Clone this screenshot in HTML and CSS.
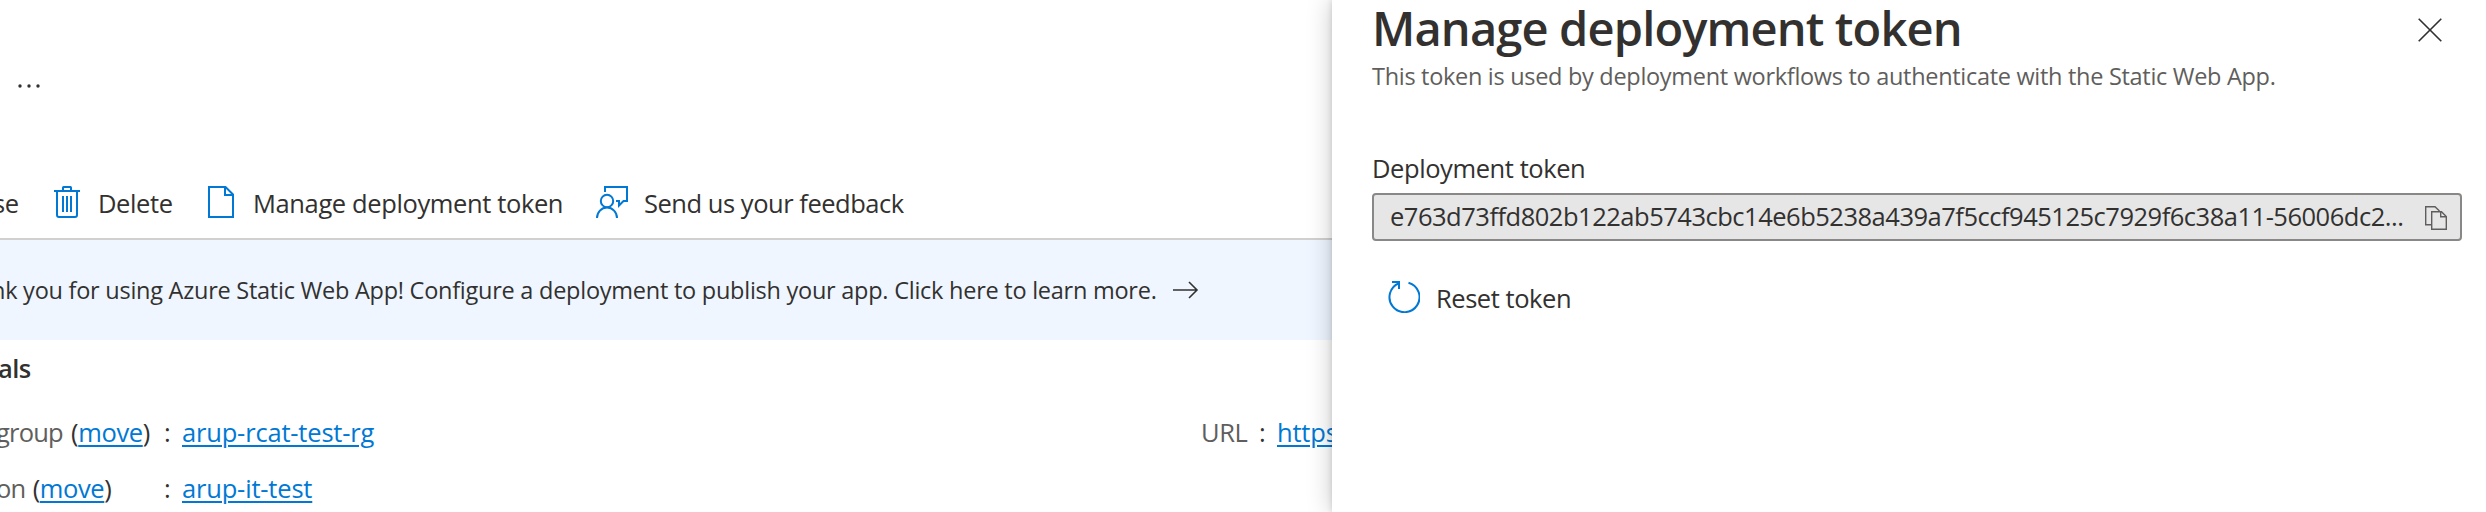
FILE: index.html
```html
<!DOCTYPE html>
<html lang="en">
<head>
<meta charset="utf-8">
<title>Manage deployment token</title>
<link rel="stylesheet" href="styles.css">
</head>
<body>
<div class="app">
  <main class="blade">
    <header class="blade-head">
      <svg class="dots" width="24" height="6" viewBox="0 0 24 6"><circle cx="3" cy="3" r="1.7"/><circle cx="12" cy="3" r="1.7"/><circle cx="21" cy="3" r="1.7"/></svg>
    </header>
    <nav class="toolbar">
      <span class="cmd cmd-browse">se</span>
      <span class="cmd cmd-delete">
        <svg class="icon" width="26" height="32" viewBox="0 0 26 32"><path d="M0 5H26M9 5V1.5Q9 1 9.500 1H16.500Q17 1 17 1.500V5M3 5V29Q3 31 5 31H21Q23 31 23 29V5M9 10V26M13 10V26M17 10V26"/></svg>
        <span>Delete</span>
      </span>
      <span class="cmd cmd-token">
        <svg class="icon" width="26" height="32" viewBox="0 0 26 32"><path d="M1 1H17.500L25 8.500V31H1ZM17 1V9H25"/></svg>
        <span>Manage deployment token</span>
      </span>
      <span class="cmd cmd-feedback">
        <svg class="icon" width="32" height="32" viewBox="0 0 32 32"><path d="M9 6V1H31V15H27.500L23 19.500V15H20M1 32A10 10.500 0 0 1 21 32"/><circle cx="11" cy="15" r="6.200"/></svg>
        <span>Send us your feedback</span>
      </span>
    </nav>
    <div class="banner">
      <span class="banner-text">nk you for using Azure Static Web App! Configure a deployment to publish your app. Click here to learn more.</span>
      <svg class="arrow" width="26" height="18" viewBox="0 0 26 18"><path d="M0 9H24M16 1L24 9L16 17"/></svg>
    </div>
    <section class="essentials">
      <h2 class="section-title">als</h2>
      <div class="row">
        <div class="key key-group"><span class="muted">group</span> (<a>move</a>)</div>
        <span class="colon">:</span>
        <a class="value rg">arup-rcat-test-rg</a>
        <span class="url muted">URL</span>
        <span class="colon url-colon">:</span>
        <a class="value">https</a>
      </div>
      <div class="row">
        <div class="key key-sub"><span class="muted">on</span> (<a>move</a>)</div>
        <span class="colon">:</span>
        <a class="value">arup-it-test</a>
      </div>
    </section>
  </main>
  <aside class="panel">
    <div class="panel-head">
      <h1 class="title">Manage deployment token</h1>
      <svg class="close" width="24" height="24" viewBox="0 0 24 24"><path d="M.7 .7L23.300 23.300M23.300 .7L.7 23.300"/></svg>
    </div>
    <p class="subtitle">This token is used by deployment workflows to authenticate with the Static Web App.</p>
    <div class="label">Deployment token</div>
    <div class="field">
      <span class="token">e763d73ffd802b122ab5743cbc14e6b5238a439a7f5ccf945125c7929f6c38a11-56006dc2...</span>
      <svg class="copy" width="22" height="24" viewBox="0 0 22 24"><path d="M6.500 18.700H.7V.7H10L14.500 5M6.700 5.700H16.500L21.300 10.500V23.300H6.700ZM15.700 5.700V10.700H21"/></svg>
    </div>
    <div class="reset">
      <svg class="icon" width="32" height="32" viewBox="0 0 32 32"><path d="M20.500 1.700A15 15 0 1 1 11 2.200M4 1H11V8"/></svg>
      <span>Reset token</span>
    </div>
  </aside>
</div>
</body>
</html>
```
FILE: styles.css
```css
* { box-sizing: border-box; }
body {
  margin: 0;
  background: #fff;
  color: #323130;
  font-family: "Open Sans", "Noto Sans", sans-serif;
  font-size: 25.5px;
  line-height: 36px;
  letter-spacing: -0.38px;
  white-space: nowrap;
}
.app { display: flex; width: 2486px; height: 512px; overflow: hidden; }
.blade { width: 1332px; height: 512px; overflow: hidden; flex: none; }
.blade-head { height: 168px; padding: 83px 0 0 17px; }
.dots { display: block; fill: #323130; }
.toolbar { display: flex; align-items: center; height: 72px; border-bottom: 2px solid #d2d0ce; }
.cmd { display: flex; align-items: center; }
.icon { display: block; flex: none; fill: none; stroke: #0078d4; stroke-width: 2; margin-top: -2px; }
.cmd-browse { width: 54px; margin-left: -7px; }
.cmd-delete { width: 154px; gap: 18px; margin-left: 7px; }
.cmd-token { width: 388px; gap: 19px; }
.cmd-feedback { gap: 16px; letter-spacing: -0.47px; }
.banner { display: flex; align-items: center; height: 100px; background: #eff6ff; font-size: 23.5px; }
.banner-text { width: 1182px; margin-left: -9px; flex: none; letter-spacing: -0.25px; }
.arrow { fill: none; stroke: #323130; stroke-width: 1.6; }
.essentials { padding-top: 10px; }
.section-title { margin: 0 0 18px -2px; font-size: 25.5px; line-height: 36px; font-weight: 600; letter-spacing: -0.6px; }
.row { display: flex; align-items: center; height: 56px; }
.muted { color: #605e5c; }
a { color: #0078d4; text-decoration: underline; text-decoration-thickness: 2px; text-underline-offset: 3px; }
.key { width: 168px; margin-left: -4px; flex: none; }
.key .muted { letter-spacing: -0.8px; margin-right: 2px; }
.key-sub .muted { margin-right: 1px; }
.colon { width: 18px; flex: none; }
.value { flex: none; letter-spacing: -0.18px; }
.rg { width: 1019px; }
.url { flex: none; width: 58px; }
.panel {
  position: relative;
  flex: 1;
  height: 512px;
  padding: 0 24px 0 40px;
  background: #fff;
  box-shadow: 0 0 24px rgba(0, 0, 0, .22), 0 0 6px rgba(0, 0, 0, .14);
}
.panel-head { display: flex; justify-content: space-between; align-items: flex-start; height: 58px; padding-right: 20px; }
.title { margin: -2px 0 0; font-size: 47px; line-height: 60px; font-weight: 600; letter-spacing: -0.85px; }
.close { margin-top: 18px; fill: none; stroke: #323130; stroke-width: 1.6; }
.subtitle { margin: 0; font-size: 23.5px; color: #605e5c; letter-spacing: -0.3px; }
.label { margin-top: 56px; letter-spacing: -0.42px; }
.field {
  display: flex;
  align-items: center;
  justify-content: space-between;
  height: 48px;
  margin-top: 7px;
  padding: 0 13px 0 16px;
  border: 2px solid #8a8886;
  border-radius: 4px;
  background: #e6e6e6;
}
.token { margin-top: -2px; letter-spacing: -0.49px; }
.copy { fill: none; stroke: #605e5c; stroke-width: 1.4; margin-top: 2px; }
.reset { display: flex; align-items: center; gap: 16px; margin: 39px 0 0 16px; letter-spacing: -0.45px; }
```
